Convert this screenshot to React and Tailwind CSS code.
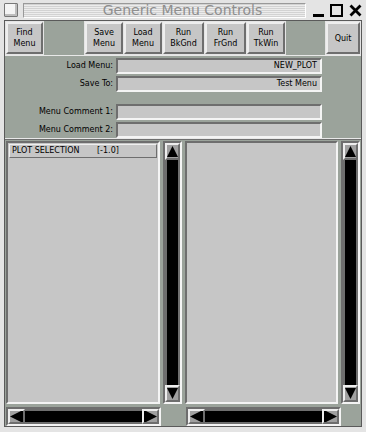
import React from "react";

const px = { fontFamily: '"DejaVu Sans", sans-serif' };

const raised =
  "border-2 border-t-[#eeeeee] border-l-[#eeeeee] border-b-[#6e6e6e] border-r-[#6e6e6e]";
const sunken =
  "border-2 border-t-[#6e6e6e] border-l-[#6e6e6e] border-b-[#f4f4f4] border-r-[#f4f4f4]";

const Arrow = ({ dir }) => {
  const pts = {
    up: "0,13 6.5,0 13,13",
    down: "0,0 6.5,13 13,0",
    left: "13,0 0,6.5 13,13",
    right: "0,0 13,6.5 0,13",
  };
  return (
    <svg width="13" height="13" viewBox="0 0 13 13">
      <polygon points={pts[dir]} fill="#000" />
    </svg>
  );
};

const ToolButton = ({ lines, w = "w-[38px]" }) => (
  <div
    className={`${w} h-[32px] bg-[#c6c6c6] ${raised} flex flex-col items-center justify-center text-[8px] leading-[11px] text-black`}
    style={px}
  >
    {lines.map((l) => (
      <span key={l}>{l}</span>
    ))}
  </div>
);

const Field = ({ label, value }) => (
  <div className="flex items-center h-[16px]">
    <span className="w-[111px] text-right pr-[3px] text-[8px] text-black" style={px}>
      {label}
    </span>
    <div
      className={`w-[206px] h-[16px] bg-[#c6c6c6] ${sunken} flex items-center justify-end pr-[3px] text-[8px] text-black`}
      style={px}
    >
      {value}
    </div>
  </div>
);

const VScroll = () => (
  <div className={`w-[19px] h-[263px] bg-[#9ba39b] ${sunken} flex flex-col`}>
    <div className={`h-[17px] bg-[#a0a0a0] ${raised} flex items-center justify-center overflow-hidden`}>
      <Arrow dir="up" />
    </div>
    <div className="flex-1 bg-black border-x-[2px] border-[#6e6e6e]" />
    <div className={`h-[17px] bg-[#a0a0a0] ${raised} flex items-center justify-center overflow-hidden`}>
      <Arrow dir="down" />
    </div>
  </div>
);

const HScroll = () => (
  <div className={`w-[155px] h-[19px] bg-[#9ba39b] ${sunken} flex`}>
    <div className={`w-[17px] bg-[#a0a0a0] ${raised} flex items-center justify-center overflow-hidden`}>
      <Arrow dir="left" />
    </div>
    <div className="flex-1 bg-black border-y-[2px] border-[#6e6e6e]" />
    <div className={`w-[17px] bg-[#a0a0a0] ${raised} flex items-center justify-center overflow-hidden`}>
      <Arrow dir="right" />
    </div>
  </div>
);

export default function App() {
  return (
    <div className="w-[366px] h-[432px] bg-[#e4e4e4] flex flex-col overflow-hidden">
      {/* title bar */}
      <div className="h-[21px] flex items-center px-[4px] gap-[5px]">
        <div className="w-[14px] h-[14px] bg-[#f4f4f4] border border-[#777] rounded-[1px] shadow-[inset_-2px_-2px_0_#bdbdbd]" />
        <div className="w-[288px] h-[15px] border border-t-[#999] border-l-[#999] border-b-[#fff] border-r-[#fff] flex items-center pl-[79px] bg-[repeating-linear-gradient(to_bottom,#d2d2d2_0px,#d2d2d2_1px,#ececec_1px,#ececec_2px)]">
          <span className="text-[14px] leading-[14px] text-[#8e8e8e] whitespace-nowrap" style={px}>
            Generic Menu Controls
          </span>
        </div>
        <div className="flex items-center gap-[6px] ml-[2px]">
          <div className="w-[11px] h-[3px] bg-black mt-[10px]" />
          <div className="w-[13px] h-[13px] border-[2.5px] border-black" />
          <svg width="13" height="13" viewBox="0 0 13 13">
            <path d="M1.5 1.5 L11.5 11.5 M11.5 1.5 L1.5 11.5" stroke="#000" strokeWidth="2.8" />
          </svg>
        </div>
      </div>

      {/* window body */}
      <div className="flex-1 mx-[4px] mb-[5px] bg-[#9ba39b] border border-[#5a5a5a] flex flex-col">
        {/* toolbar */}
        <div className="flex h-[34px] items-center bg-[#9ba39b]">
          <div className="h-full bg-[#e4e4e4] flex items-center px-[1px]">
            <ToolButton lines={["Find", "Menu"]} w="w-[37px]" />
          </div>
          <div className="w-[40px]" />
          <div className="h-full bg-[#e4e4e4] flex items-center gap-[1px] px-[1px]">
            <ToolButton lines={["Save", "Menu"]} />
            <ToolButton lines={["Load", "Menu"]} />
            <ToolButton lines={["Run", "BkGnd"]} w="w-[41px]" />
            <ToolButton lines={["Run", "FrGnd"]} w="w-[41px]" />
            <ToolButton lines={["Run", "TkWin"]} />
          </div>
          <div className="flex-1" />
          <div className="h-full bg-[#e4e4e4] flex items-center px-[1px]">
            <ToolButton lines={["Quit"]} w="w-[34px]" />
          </div>
        </div>

        {/* form */}
        <div className="h-[84px] border-y border-[#e8e8e8] flex flex-col pt-[2px] gap-[2px]">
          <Field label="Load Menu:" value="NEW_PLOT" />
          <Field label="Save To:" value="Test Menu" />
          <div className="h-[10px]" />
          <Field label="Menu Comment 1:" value="" />
          <Field label="Menu Comment 2:" value="" />
        </div>

        {/* lists */}
        <div className="flex-1 flex flex-col px-[1px] pt-[1px] border-t border-[#6e6e6e]">
          <div className="flex gap-[3px]">
            <div className={`w-[155px] h-[263px] bg-[#c6c6c6] ${sunken} p-[1px]`}>
              <div
                className="h-[14px] bg-[#c6c6c6] border border-t-[#efefef] border-l-[#efefef] border-b-[#6e6e6e] border-r-[#6e6e6e] flex items-center text-[8px] text-black pl-[2px]"
                style={px}
              >
                <span className="w-[85px]">PLOT SELECTION</span>
                <span>[-1.0]</span>
              </div>
            </div>
            <VScroll />
            <div className={`w-[155px] h-[263px] bg-[#c6c6c6] ${sunken}`} />
            <VScroll />
          </div>
          <div className="flex gap-[3px] mt-[3px]">
            <HScroll />
            <div className="w-[19px]" />
            <HScroll />
          </div>
        </div>
      </div>
    </div>
  );
}
